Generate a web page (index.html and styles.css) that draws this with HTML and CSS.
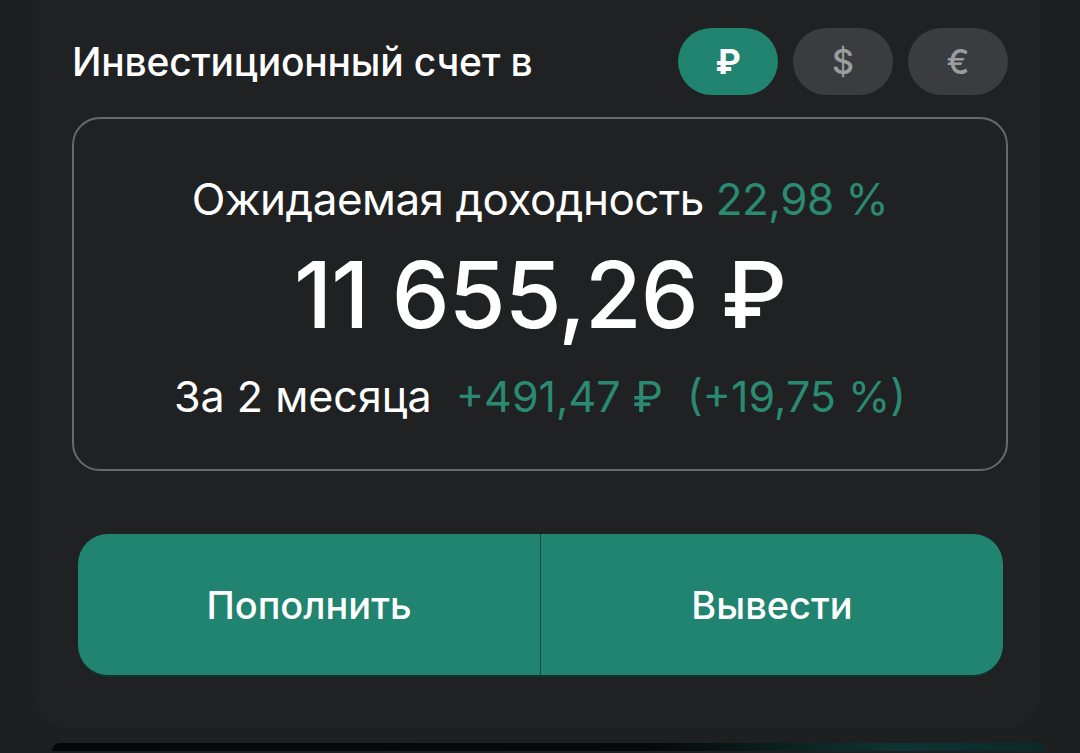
FILE: index.html
```html
<!DOCTYPE html>
<html lang="ru">
<head>
  <meta charset="UTF-8" />
  <meta name="viewport" content="width=device-width, initial-scale=1.0" />
  <title>Инвестиционный счет</title>
  <link rel="stylesheet" href="styles.css">
</head>
<body>
  <section class="account">
    <div class="account-head">
      <h2 class="account-title">Инвестиционный счет в</h2>
      <div class="currency-switch">
        <button class="currency active">₽</button>
        <button class="currency">$</button>
        <button class="currency">€</button>
      </div>
    </div>

    <div class="balance-card">
      <div class="yield">Ожидаемая доходность <span class="green">22,98 %</span></div>
      <div class="balance">11 655,26 ₽</div>
      <div class="period">За 2 месяца <span class="green gap">+491,47 ₽</span> <span class="green gap">(+19,75 %)</span></div>
    </div>

    <div class="actions">
      <button class="action">Пополнить</button>
      <button class="action">Вывести</button>
    </div>
  </section>

  <div class="next-card"></div>
</body>
</html>
```

FILE: styles.css
```css
body {
  margin: 0;
  font-family: Inter, Roboto, "Noto Sans", sans-serif;
  background: #1e1f21;
  color: #fff;
  height: 753px;
  overflow: hidden;
}
.account {
  margin: 0 40px 0 34px;
  padding: 28px 32px 53px 38px;
  background: #202123;
  border-radius: 0 0 34px 34px;
}
.account-head {
  display: flex;
  align-items: center;
  justify-content: space-between;
  height: 67px;
}
.account-title {
  margin: 0;
  font-size: 39px;
  font-weight: 500;
  letter-spacing: -0.2px;
}
.currency-switch {
  display: flex;
  gap: 15px;
}
.currency {
  width: 100px;
  height: 67px;
  border: none;
  border-radius: 34px;
  background: #3a3c3f;
  color: #9b9da0;
  font-family: inherit;
  font-size: 34px;
  font-weight: 500;
}
.currency.active {
  background: #208470;
  color: #fff;
  font-weight: 700;
}
.balance-card {
  margin-top: 22px;
  width: 932px;
  height: 350px;
  border: 2px solid #67686a;
  border-radius: 28px;
  display: flex;
  flex-direction: column;
  align-items: center;
  text-align: center;
}
.yield {
  margin-top: 50px;
  font-size: 44px;
  line-height: 60px;
  letter-spacing: -0.5px;
}
.balance {
  margin-top: 12px;
  font-size: 92px;
  font-weight: 500;
  line-height: 108px;
  letter-spacing: -1px;
}
.period {
  margin-top: 18px;
  font-size: 43px;
  line-height: 58px;
  letter-spacing: 0;
}
.green {
  color: #2a8a72;
}
.gap {
  margin-left: 12px;
}
.actions {
  margin: 63px 5px 0 6px;
  display: flex;
  height: 141px;
  border-radius: 30px;
  overflow: hidden;
  box-shadow: 0 2px 0 #10332c;
}
.action {
  flex: 1;
  border: none;
  background: #208470;
  color: #fff;
  font-family: inherit;
  font-size: 38px;
  font-weight: 500;
}
.action + .action {
  border-left: 1px solid #15463c;
}
.next-card {
  margin: 15px 34px 0 52px;
  height: 8px;
  border-radius: 32px 32px 0 0;
  background: linear-gradient(90deg, #060708 0%, #070809 60%, #0d3533 85%, #0a2a2a 100%);
}
```
